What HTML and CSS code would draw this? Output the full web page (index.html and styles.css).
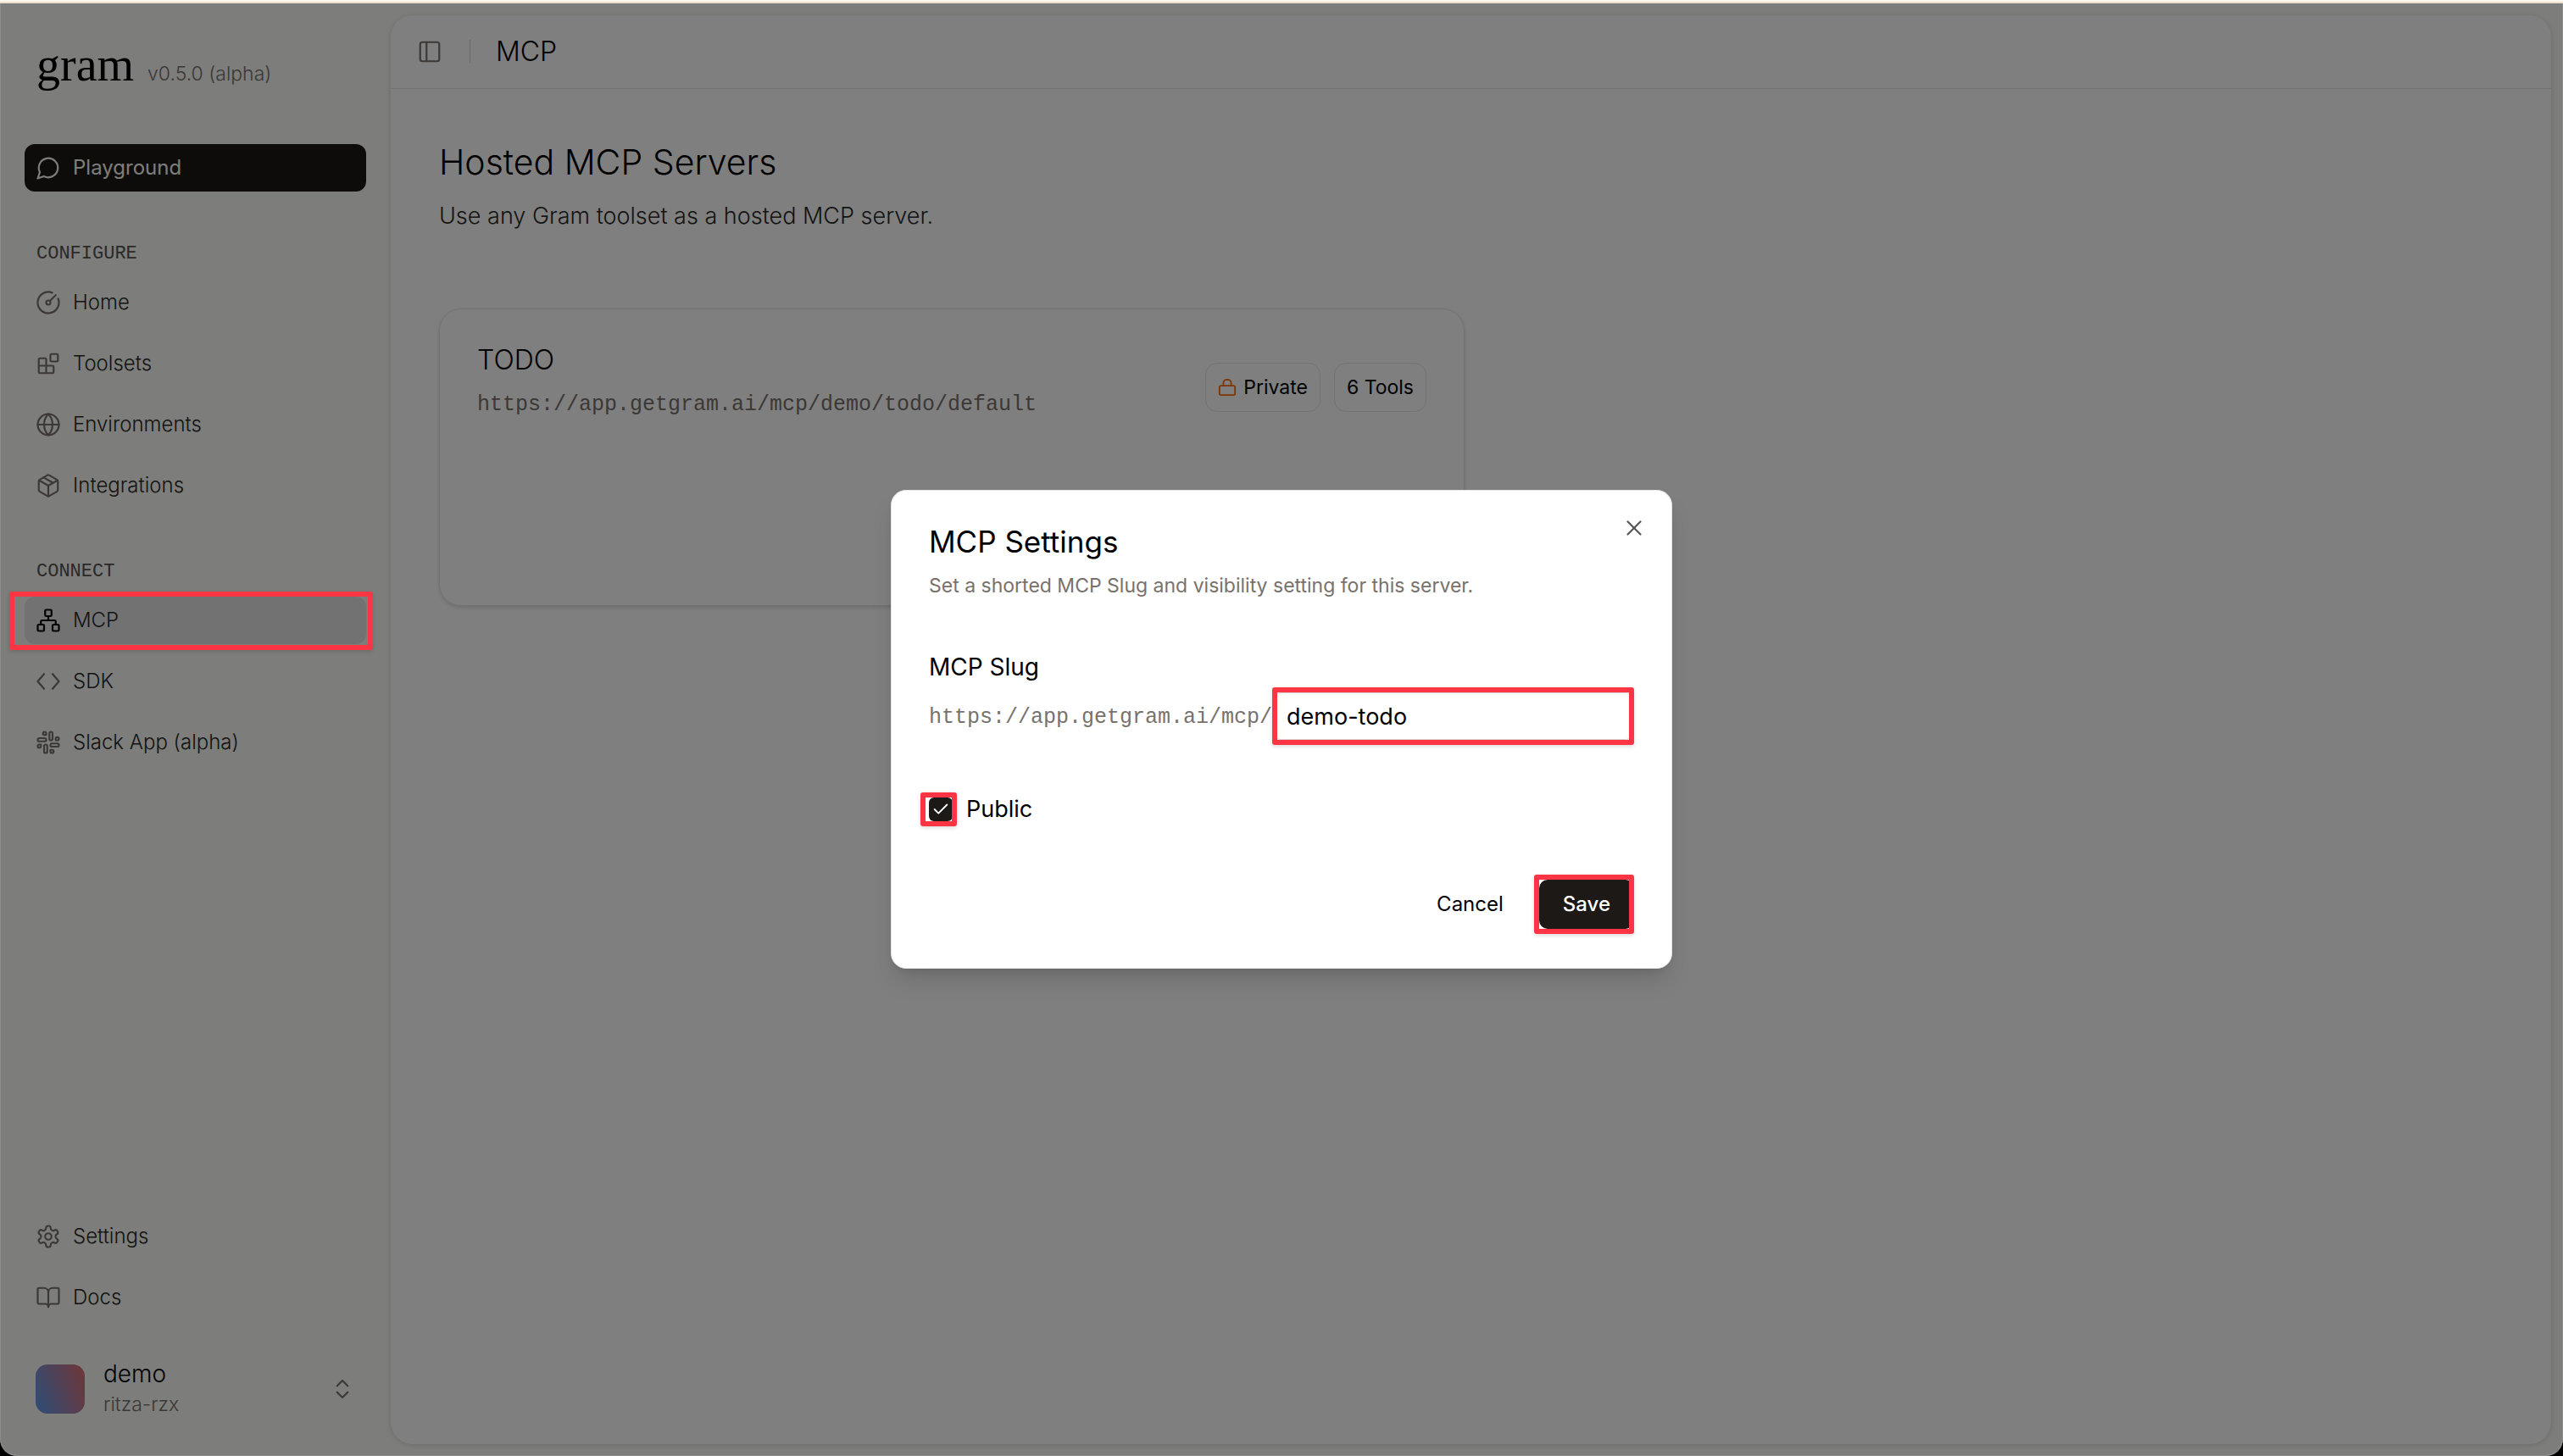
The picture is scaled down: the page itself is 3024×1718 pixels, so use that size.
FILE: index.html
```html
<!DOCTYPE html>
<html lang="en">
<head>
<meta charset="utf-8">
<meta name="viewport" content="width=device-width, initial-scale=1">
<title>MCP - gram</title>
<link rel="stylesheet" href="styles.css">
</head>
<body>
<div class="browser-edge"></div>
<div class="window">
  <aside class="sidebar">
    <div class="brand"><span class="logo">gram</span><span class="version">v0.5.0 (alpha)</span></div>
    <a class="nav-item nav-primary" href="#playground">
      <svg class="icon" viewBox="0 0 24 24"><path d="M7.9 20A9 9 0 1 0 4 16.1L2 22Z"/></svg>Playground</a>
    <nav class="nav">
      <h2 class="nav-label">CONFIGURE</h2>
      <ul class="nav-list">
        <li><a class="nav-item" href="#home"><svg class="icon" viewBox="0 0 24 24"><path d="M15.6 2.7a10 10 0 1 0 5.7 5.7"/><circle cx="12" cy="12" r="2"/><path d="M13.4 10.6 19 5"/></svg>Home</a></li>
        <li><a class="nav-item" href="#toolsets"><svg class="icon" viewBox="0 0 24 24"><rect width="7" height="7" x="14" y="3" rx="1"/><path d="M10 21V8a1 1 0 0 0-1-1H4a1 1 0 0 0-1 1v12a1 1 0 0 0 1 1h12a1 1 0 0 0 1-1v-5a1 1 0 0 0-1-1H3"/></svg>Toolsets</a></li>
        <li><a class="nav-item" href="#environments"><svg class="icon" viewBox="0 0 24 24"><circle cx="12" cy="12" r="10"/><path d="M12 2c-2.700 2.800-4 6.200-4 10s1.300 7.200 4 10c2.700-2.800 4-6.200 4-10s-1.300-7.200-4-10"/><path d="M2 12h20"/></svg>Environments</a></li>
        <li><a class="nav-item" href="#integrations"><svg class="icon" viewBox="0 0 24 24"><path d="M11 21.730a2 2 0 0 0 2 0l7-4A2 2 0 0 0 21 16V8a2 2 0 0 0-1-1.730l-7-4a2 2 0 0 0-2 0l-7 4A2 2 0 0 0 3 8v8a2 2 0 0 0 1 1.730z"/><path d="M12 22V12"/><path d="m3.300 7 8.700 5 8.700-5"/><path d="m7.500 4.270 9 5.150"/></svg>Integrations</a></li>
      </ul>
      <h2 class="nav-label">CONNECT</h2>
      <ul class="nav-list">
        <li><a class="nav-item nav-active" href="#mcp" aria-current="page"><svg class="icon" viewBox="0 0 24 24"><rect x="16" y="16" width="6" height="6" rx="1"/><rect x="2" y="16" width="6" height="6" rx="1"/><rect x="9" y="2" width="6" height="6" rx="1"/><path d="M5 16v-3a1 1 0 0 1 1-1h12a1 1 0 0 1 1 1v3"/><path d="M12 12V8"/></svg>MCP<span class="mark mark-nav"></span></a></li>
        <li><a class="nav-item" href="#sdk"><svg class="icon" viewBox="0 0 24 24"><path d="m16 19 6-7-6-7"/><path d="m8 5-6 7 6 7"/></svg>SDK</a></li>
        <li><a class="nav-item" href="#slack"><svg class="icon" viewBox="0 0 24 24"><rect width="3" height="8" x="13" y="2" rx="1.500"/><path d="M19 8.500V10h1.500A1.500 1.500 0 1 0 19 8.500"/><rect width="3" height="8" x="8" y="14" rx="1.500"/><path d="M5 15.500V14H3.500A1.500 1.500 0 1 0 5 15.500"/><rect width="8" height="3" x="14" y="13" rx="1.500"/><path d="M15.500 19H14v1.500a1.500 1.500 0 1 0 1.500-1.500"/><rect width="8" height="3" x="2" y="8" rx="1.500"/><path d="M8.500 5H10V3.500A1.500 1.500 0 1 0 8.500 5"/></svg>Slack App (alpha)</a></li>
      </ul>
    </nav>
    <div class="sidebar-footer">
      <ul class="nav-list">
        <li><a class="nav-item" href="#settings"><svg class="icon" viewBox="0 0 24 24"><path d="M12.220 2h-.44a2 2 0 0 0-2 2v.18a2 2 0 0 1-1 1.730l-.43.25a2 2 0 0 1-2 0l-.15-.08a2 2 0 0 0-2.730.73l-.22.38a2 2 0 0 0 .73 2.730l.15.1a2 2 0 0 1 1 1.720v.51a2 2 0 0 1-1 1.740l-.15.09a2 2 0 0 0-.73 2.730l.22.38a2 2 0 0 0 2.730.73l.15-.08a2 2 0 0 1 2 0l.43.25a2 2 0 0 1 1 1.730V20a2 2 0 0 0 2 2h.44a2 2 0 0 0 2-2v-.18a2 2 0 0 1 1-1.730l.43-.25a2 2 0 0 1 2 0l.15.08a2 2 0 0 0 2.730-.73l.22-.39a2 2 0 0 0-.73-2.730l-.15-.08a2 2 0 0 1-1-1.740v-.5a2 2 0 0 1 1-1.740l.15-.09a2 2 0 0 0 .73-2.730l-.22-.38a2 2 0 0 0-2.730-.73l-.15.08a2 2 0 0 1-2 0l-.43-.25a2 2 0 0 1-1-1.730V4a2 2 0 0 0-2-2z"/><circle cx="12" cy="12" r="3"/></svg>Settings</a></li>
        <li><a class="nav-item" href="#docs"><svg class="icon" viewBox="0 0 24 24"><path d="M12 7v14"/><path d="M3 18a1 1 0 0 1-1-1V4a1 1 0 0 1 1-1h5a4 4 0 0 1 4 4 4 4 0 0 1 4-4h5a1 1 0 0 1 1 1v13a1 1 0 0 1-1 1h-6a3 3 0 0 0-3 3 3 3 0 0 0-3-3z"/></svg>Docs</a></li>
      </ul>
      <button class="account" type="button">
        <span class="avatar"></span>
        <span class="account-text"><span class="account-name">demo</span><span class="account-org">ritza-rzx</span></span>
        <svg class="icon" viewBox="0 0 24 24"><path d="m7 15 5 5 5-5"/><path d="m7 9 5-5 5 5"/></svg>
      </button>
    </div>
  </aside>

  <main class="panel">
    <header class="topbar">
      <button class="icon-button" type="button" aria-label="Toggle sidebar"><svg class="icon" viewBox="0 0 24 24"><rect width="18" height="18" x="3" y="3" rx="2"/><path d="M9 3v18"/></svg></button>
      <span class="divider"></span>
      <span class="crumb">MCP</span>
    </header>
    <div class="content">
      <h1 class="title">Hosted MCP Servers</h1>
      <p class="subtitle">Use any Gram toolset as a hosted MCP server.</p>
      <article class="card">
        <div class="card-text">
          <h2 class="card-title">TODO</h2>
          <p class="url">https://app.getgram.ai/mcp/demo/todo/default</p>
        </div>
        <div class="badges">
          <span class="badge"><svg class="icon lock" viewBox="0 0 24 24"><rect width="20" height="12" x="2" y="10" rx="2"/><path d="M7 10V6a5 4 0 0 1 10 0v4"/></svg>Private</span>
          <span class="badge">6 Tools</span>
        </div>
      </article>
    </div>
  </main>

  <div class="overlay">
    <form class="modal" role="dialog" aria-labelledby="modal-title">
      <button class="icon-button close" type="button" aria-label="Close"><svg class="icon" viewBox="0 0 24 24"><path d="M18 6 6 18"/><path d="m6 6 12 12"/></svg></button>
      <h2 class="modal-title" id="modal-title">MCP Settings</h2>
      <p class="modal-desc">Set a shorted MCP Slug and visibility setting for this server.</p>
      <label class="field-label" for="slug">MCP Slug</label>
      <div class="slug-row">
        <span class="url">https://app.getgram.ai/mcp/</span>
        <span class="slug-box"><input class="slug-input" id="slug" type="text" value="demo-todo"><span class="mark mark-input"></span></span>
      </div>
      <div class="check-row">
        <span class="check-box"><input class="check-input" id="public" type="checkbox" checked><svg class="tick" viewBox="0 0 24 24"><path d="M20 6 9 17l-5-5"/></svg><span class="mark mark-check"></span></span>
        <label class="check-label" for="public">Public</label>
      </div>
      <div class="actions">
        <button class="button" type="button">Cancel</button>
        <button class="button button-primary" type="submit">Save<span class="mark mark-save"></span></button>
      </div>
    </form>
  </div>
</div>
</body>
</html>
```
FILE: styles.css
```css
:root {
  --ink: #000;
  --text: #282826;
  --muted: #78716c;
  --line: #e4e4e4;
  --dark: #1c1917;
  --sans: "Inter", "Liberation Sans", sans-serif;
  --mono: "Liberation Mono", monospace;
}

* { box-sizing: border-box; }

h1, h2, p, ul { margin: 0; padding: 0; font-weight: 300; }
ul { list-style: none; }

body {
  margin: 0;
  min-height: 100vh;
  display: flex;
  flex-direction: column;
  background: #000;
  color: var(--ink);
  font: 300 24px/32px var(--sans);
}

button, input { font: inherit; color: inherit; }

button {
  padding: 0;
  border: 0;
  background: none;
  cursor: pointer;
}

.icon {
  flex: none;
  display: block;
  width: 30px;
  height: 30px;
  fill: none;
  stroke: var(--muted);
  stroke-width: 1.75;
  stroke-linecap: round;
  stroke-linejoin: round;
}

.browser-edge {
  height: 4px;
  background: #fdf8ec;
  border-bottom: 2px solid #e9dfcb;
}

.window {
  position: relative;
  flex: 1;
  display: flex;
  padding: 0 13px 13px 0;
  border: 1px solid #8c8c8a;
  border-top: 0;
  border-radius: 0 0 20px 20px;
  background: #fafaf6;
  overflow: hidden;
}

/* Sidebar */
.sidebar {
  flex: none;
  width: 460px;
  display: flex;
  flex-direction: column;
  padding: 44px 29px 29px 28px;
}

.brand {
  display: flex;
  align-items: baseline;
  gap: 16px;
  padding-left: 14px;
  margin-bottom: 66px;
}

.logo { font: 400 56px/56px "Liberation Serif", serif; }
.version { color: var(--muted); font-size: 23px; }

.nav-list {
  display: flex;
  flex-direction: column;
  gap: 16px;
}

.nav-item {
  position: relative;
  display: flex;
  align-items: center;
  gap: 14px;
  height: 56px;
  padding: 0 13px;
  border-radius: 12px;
  color: var(--text);
  text-decoration: none;
}

.nav-primary { background: var(--dark); color: #fafaf4; font-weight: 400; }
.nav-primary .icon { stroke: #fafaf4; }
.nav-active { background: var(--line); }
.nav-active .icon { stroke: var(--ink); }

.nav-label {
  margin: 62px 0 17px;
  padding-left: 14px;
  color: #57534e;
  font: 400 22px/24px var(--mono);
}

.sidebar-footer { margin-top: auto; }

.account {
  display: flex;
  align-items: center;
  gap: 22px;
  width: 100%;
  margin-top: 44px;
  padding: 0 13px;
  text-align: left;
}

.avatar {
  width: 58px;
  height: 58px;
  border-radius: 14px;
  background: linear-gradient(70deg, #5a9af0, #e06c70);
}

.account-text { flex: 1; display: flex; flex-direction: column; line-height: 36px; }
.account-name { font-size: 28px; }
.account-org { color: var(--muted); font-size: 23px; }

/* Main panel */
.panel {
  flex: 1;
  margin-top: 14px;
  border-radius: 26px;
  background: #fff;
  box-shadow: 0 1px 6px rgb(0 0 0 / 14%);
}

.topbar {
  display: flex;
  align-items: center;
  height: 87px;
  padding-left: 31px;
  border-bottom: 1px solid var(--line);
}

.divider {
  width: 1px;
  height: 28px;
  margin: 0 30px 0 32px;
  background: #d6d3d1;
}

.crumb { font-size: 32px; line-height: 40px; }

.content { padding: 60px 57px; }
.title { font-size: 41px; line-height: 52px; }
.subtitle { margin-top: 20px; color: var(--text); font-size: 27px; line-height: 36px; }

.card {
  display: flex;
  justify-content: space-between;
  align-items: flex-start;
  width: 100%;
  max-width: 1210px;
  min-height: 351px;
  margin-top: 91px;
  padding: 40px 44px;
  border: 1px solid var(--line);
  border-radius: 26px;
  box-shadow: 0 2px 5px rgb(0 0 0 / 14%);
}

.card-title { font-size: 32px; line-height: 40px; }
.url { padding-top: 4px; color: var(--muted); font: 400 25px/32px var(--mono); }
.card-title + .url { margin-top: 13px; }

.badges { display: flex; gap: 16px; padding-top: 23px; }

.badge {
  display: flex;
  align-items: center;
  gap: 8px;
  height: 58px;
  padding: 0 14px;
  border: 1px solid var(--line);
  border-radius: 14px;
  font-size: 23px;
  font-weight: 400;
}

.lock { width: 22px; height: 22px; stroke: #ff6a00; stroke-width: 2; }

/* Dialog */
.overlay {
  position: absolute;
  inset: 0;
  z-index: 10;
  display: flex;
  align-items: center;
  justify-content: center;
  background: rgb(0 0 0 / 50%);
}

.modal {
  position: relative;
  width: 100%;
  max-width: 922px;
  padding: 40px 44px 46px;
  border: 1px solid #e7e5e4;
  border-radius: 18px;
  background: #fff;
  box-shadow: 0 18px 30px -6px rgb(0 0 0 / 14%), 0 6px 12px -6px rgb(0 0 0 / 14%);
  font-weight: 400;
}

.close { position: absolute; top: 29px; right: 29px; }
.close .icon { stroke: #555; }

.modal-title { font-size: 35px; line-height: 40px; font-weight: 400; }
.modal-desc { margin-top: 16px; color: var(--muted); font-size: 23px; font-weight: 400; }

.field-label {
  display: block;
  margin-top: 62px;
  font-size: 28px;
  line-height: 36px;
}

.slug-row { display: flex; align-items: center; margin-top: 12px; }
.slug-box { position: relative; flex: 1; display: flex; }

.slug-input {
  width: 100%;
  height: 56px;
  padding: 0 16px;
  border: 1px solid #d6d3d1;
  border-radius: 10px;
  background: #fff;
  font-size: 27px;
}

.check-row { display: flex; align-items: center; gap: 16px; margin-top: 64px; }
.check-box { position: relative; display: flex; }

.check-input {
  appearance: none;
  width: 28px;
  height: 28px;
  margin: 0;
  border-radius: 6px;
  background: var(--dark);
}

.tick {
  position: absolute;
  inset: 3px;
  fill: none;
  stroke: #fff;
  stroke-width: 2;
  stroke-linecap: round;
  stroke-linejoin: round;
  pointer-events: none;
}

.check-label { font-size: 27px; line-height: 36px; }

.actions { display: flex; justify-content: flex-end; gap: 14px; margin-top: 65px; }

.button {
  position: relative;
  height: 58px;
  padding: 0 28px;
  border-radius: 10px;
}

.button-primary { background: var(--dark); color: #fff; font-weight: 500; }

/* Red frames that point out the controls */
.mark {
  position: absolute;
  z-index: 20;
  border: 6px solid #fb3543;
  border-radius: 3px;
  box-shadow: 0 2px 5px rgb(0 0 0 / 14%);
  pointer-events: none;
}

.mark-nav { inset: -6px -8px -7px -18px; }
.mark-input { inset: -6px 0; }
.mark-check { inset: -6px -5px -6px -10px; }
.mark-save { inset: -6px 0 -6px -6px; }
```
